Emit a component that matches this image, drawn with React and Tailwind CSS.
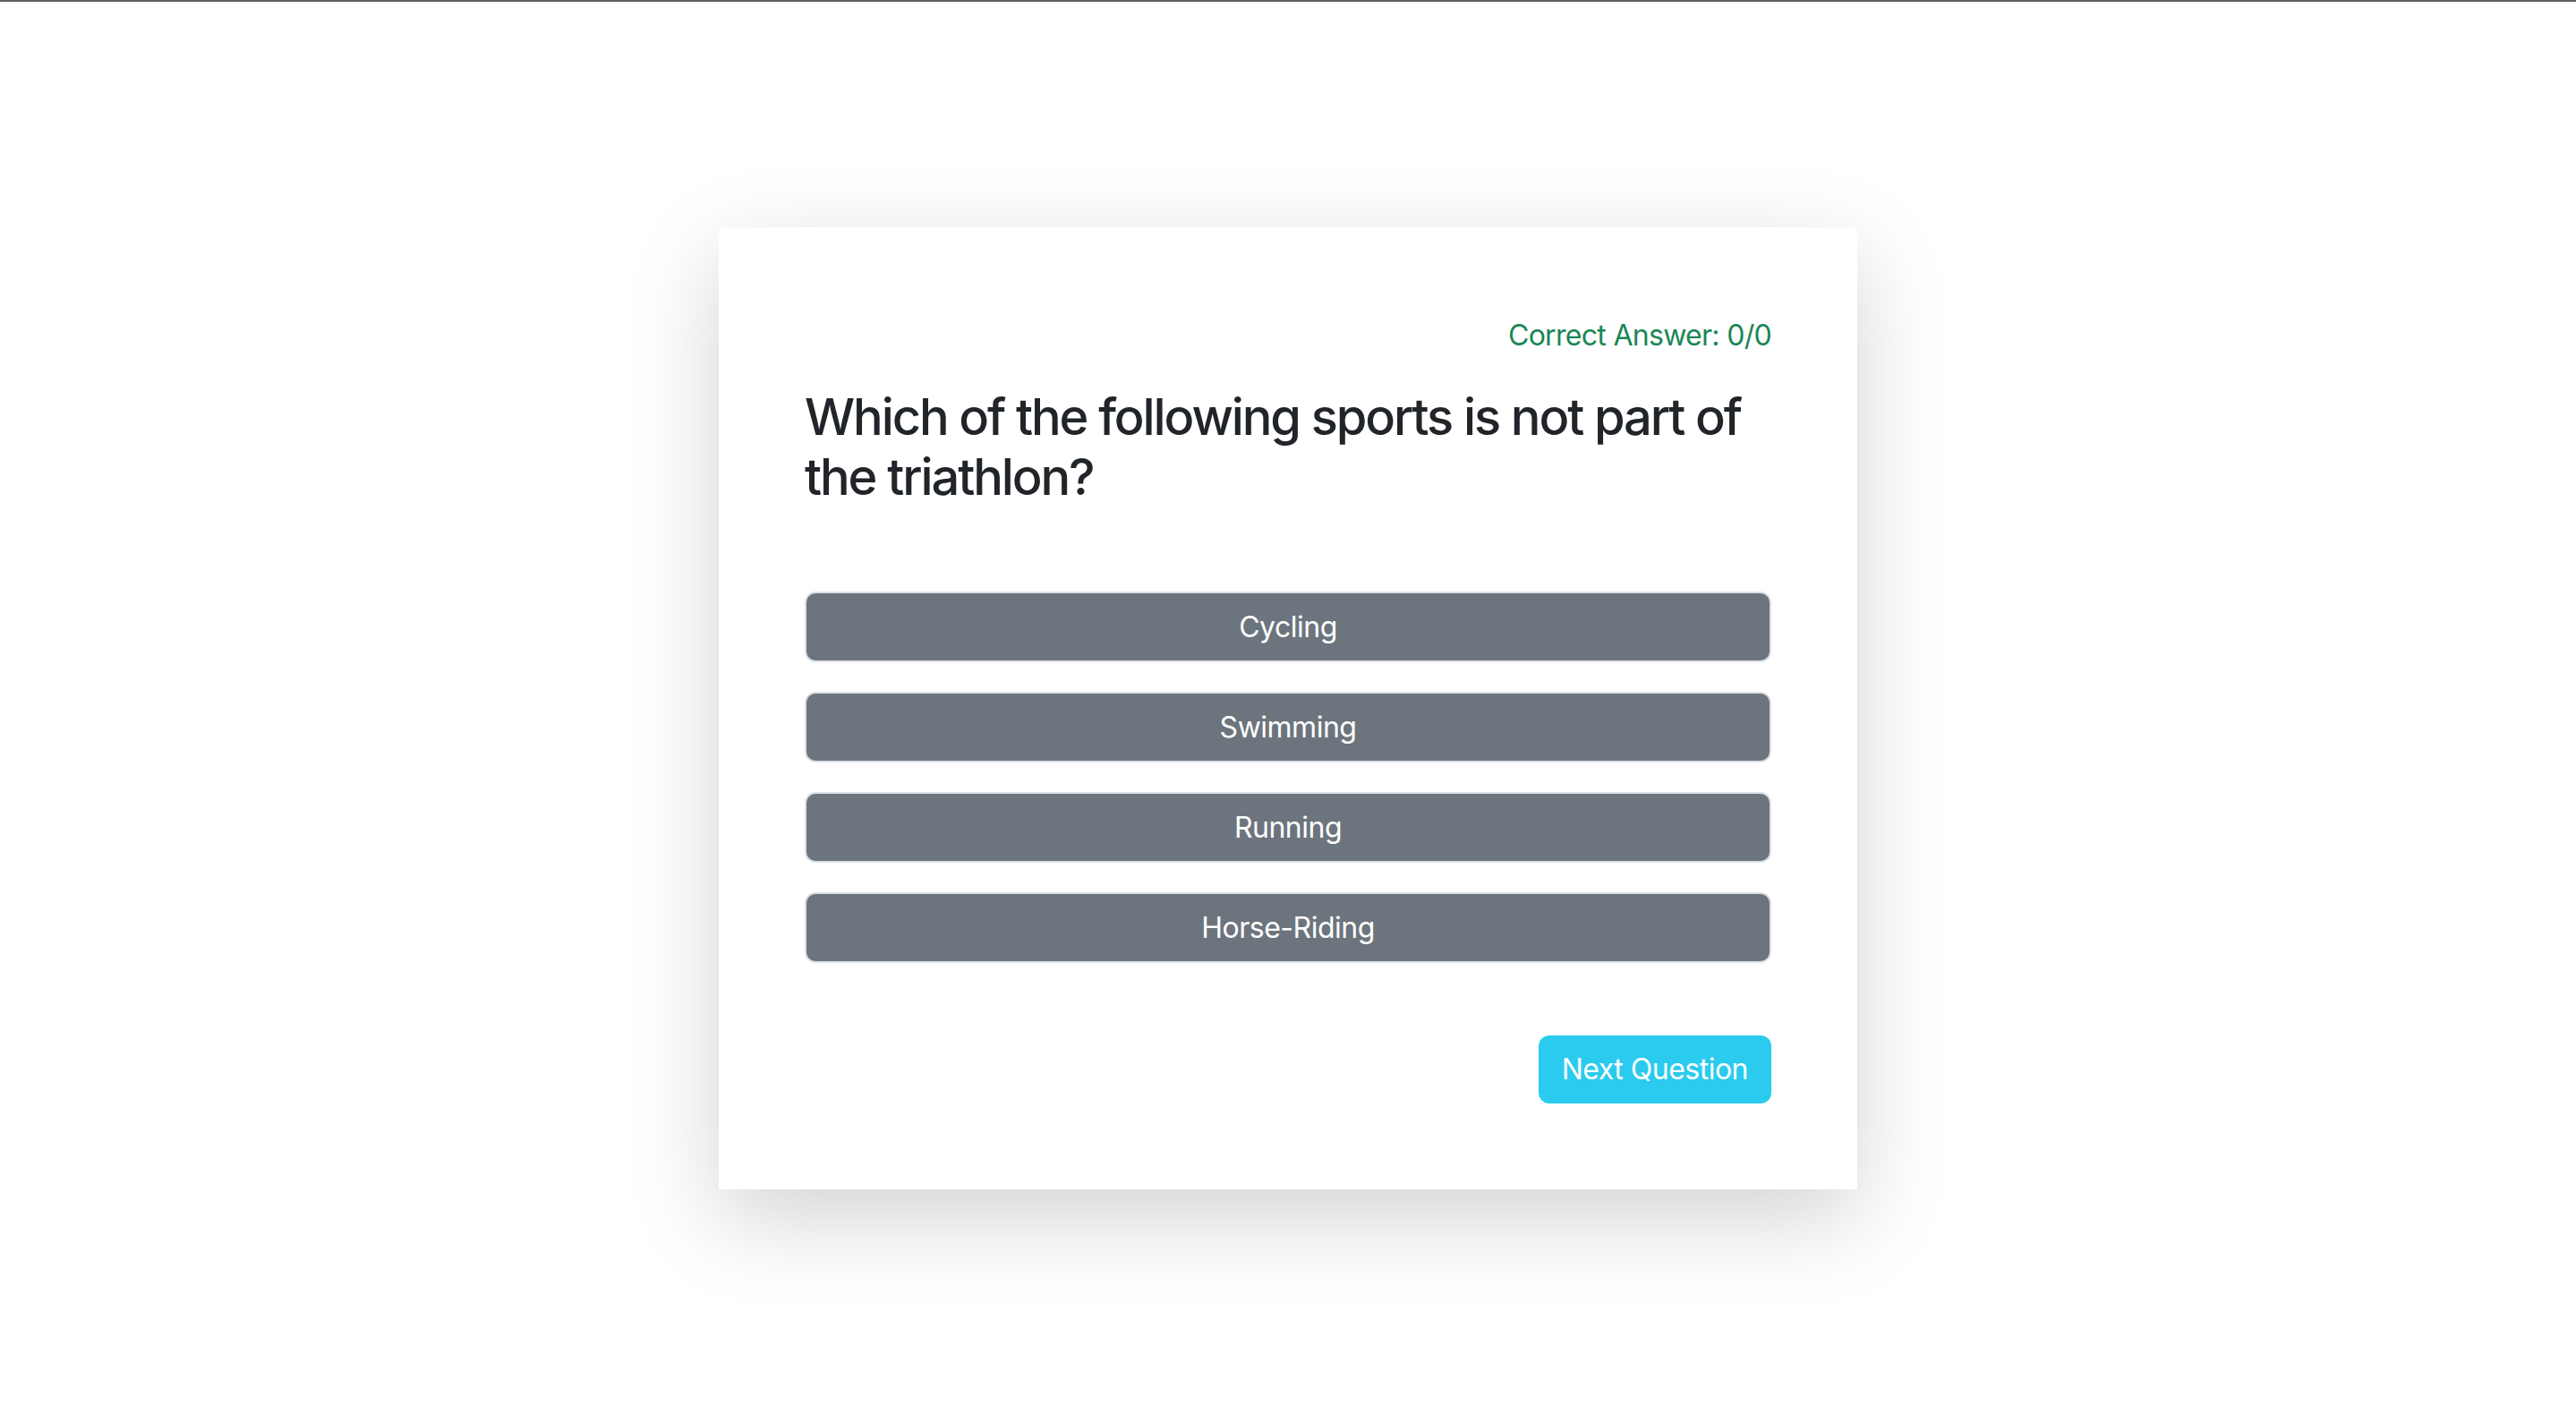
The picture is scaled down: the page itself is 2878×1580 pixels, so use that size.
const options = ["Cycling", "Swimming", "Running", "Horse-Riding"];

export default function App() {
  return (
    <div className="min-h-[1580px] bg-white font-['Inter','Noto_Sans',sans-serif] text-[#212529]">
      <div className="h-[2px] bg-[#5f5f63]" />

      <div className="pt-[252px] flex justify-center">
        <div className="w-[1272px] bg-white px-[96px] pt-[97px] pb-[96px] shadow-[0_32px_96px_rgba(0,0,0,0.175)]">
          <p className="text-right text-[32px] leading-[48px] tracking-[-0.7px] text-[#198754] mb-[34px]">
            Correct Answer: 0/0
          </p>

          <h3 className="text-[56px] leading-[67px] font-medium tracking-[-2.1px]">
            Which of the following sports is not part of the triathlon?
          </h3>

          <div className="mt-[94px] flex flex-col gap-[33px]">
            {options.map((opt) => (
              <button
                key={opt}
                className="h-[79px] w-full rounded-[12px] border-2 border-[#dee2e6] bg-[#6c757d] text-[32px] leading-[48px] tracking-[-0.5px] text-white"
              >
                {opt}
              </button>
            ))}
          </div>

          <div className="mt-[81px] flex justify-end">
            <button className="h-[76px] rounded-[12px] bg-[#2acbee] px-[26px] text-[32px] leading-[48px] tracking-[-0.5px] text-white">
              Next Question
            </button>
          </div>
        </div>
      </div>
    </div>
  );
}
